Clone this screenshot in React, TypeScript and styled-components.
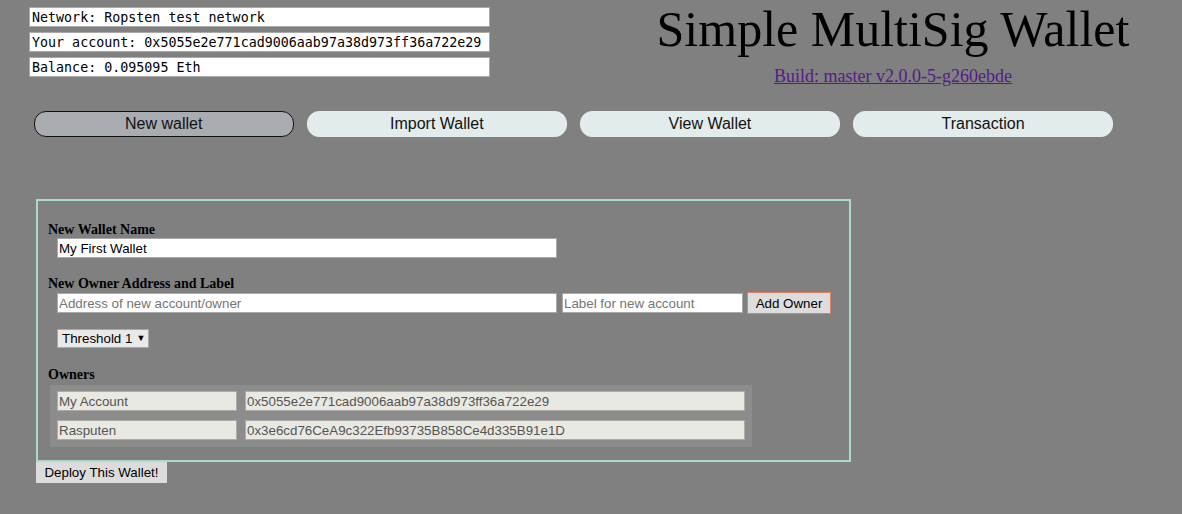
import React from "react";
import styled, { createGlobalStyle } from "styled-components";

const GlobalStyle = createGlobalStyle`
  html, body {
    margin: 0;
    padding: 0;
    background: #808080;
  }
  body {
    font-family: "Liberation Serif", serif;
    color: #000;
  }
  * { box-sizing: border-box; }
`;

const Page = styled.div`
  width: 1182px;
  min-height: 514px;
  background: #808080;
`;

const Header = styled.header`
  display: flex;
  align-items: flex-start;
`;

const InfoColumn = styled.div`
  margin: 7px 0 0 29px;
  width: 461px;
  display: flex;
  flex-direction: column;
  gap: 5px;
`;

const InfoBox = styled.div`
  height: 20px;
  background: #fff;
  border: 1px solid #a9a9a9;
  padding: 0 2px;
  font-family: "DejaVu Sans Mono", monospace;
  font-size: 13.33px;
  line-height: 19px;
  white-space: nowrap;
  color: #000;
`;

const TitleBlock = styled.div`
  flex: 1;
  margin-left: 114px;
  text-align: center;
`;

const Title = styled.h1`
  margin: 0;
  font-family: "Liberation Serif", serif;
  font-weight: normal;
  font-size: 50px;
  line-height: normal;
  color: #000;
`;

const BuildLink = styled.a`
  display: inline-block;
  margin-top: 8px;
  font-family: "Liberation Serif", serif;
  font-size: 18px;
  color: #551a8b;
  text-decoration: underline;
`;

const Tabs = styled.nav`
  display: flex;
  gap: 13.6px;
  margin: 24px 0 0 34px;
`;

const Tab = styled.button<{ $active?: boolean }>`
  width: 259.5px;
  height: 26px;
  border-radius: 12px;
  border: 1px solid ${(p) => (p.$active ? "#111" : "#e3ecec")};
  background: ${(p) => (p.$active ? "#a9adb1" : "#e3ecec")};
  font-family: "Liberation Sans", sans-serif;
  font-size: 16px;
  color: #111;
  padding: 0;
  cursor: pointer;
`;

const FormBox = styled.section`
  margin: 62px 0 0 36px;
  width: 815px;
  border: 2px solid #a9d9cf;
  padding: 21px 10px 13px 10px;
`;

const Label = styled.div`
  font-family: "Liberation Serif", serif;
  font-weight: bold;
  font-size: 14px;
  line-height: 16px;
  color: #000;
`;

const FieldRow = styled.div<{ $mb?: number }>`
  display: flex;
  align-items: center;
  margin-left: 9px;
  margin-bottom: ${(p) => p.$mb ?? 0}px;
`;

const TextInput = styled.input<{ $w: number }>`
  width: ${(p) => p.$w}px;
  height: 20px;
  border: 1px solid #a9a9a9;
  background: #fff;
  padding: 0 1px;
  font-family: "Liberation Sans", sans-serif;
  font-size: 13.33px;
  color: #000;
  outline: none;
  &::placeholder { color: #757575; }
`;

const LabelInput = styled(TextInput)`
  margin-left: 5px;
`;

const AddButton = styled.button`
  margin-left: 4px;
  width: 84px;
  height: 22px;
  background: #dddddd;
  border: 1px solid #e07f62;
  font-family: "Liberation Sans", sans-serif;
  font-size: 13.33px;
  color: #000;
  padding: 0;
`;

const Select = styled.div`
  display: flex;
  align-items: center;
  gap: 4px;
  width: 92px;
  height: 19px;
  background: #e9e9e9;
  border: 1px solid #a9a9a9;
  padding: 0 0 0 4px;
  font-family: "Liberation Sans", sans-serif;
  font-size: 13.33px;
  white-space: nowrap;
  color: #000;
`;

const Arrow = styled.span`
  font-size: 9px;
  line-height: 1;
`;

const OwnersTable = styled.div`
  margin: 2px 0 0 2px;
  width: 702px;
  background: #8c8c8c;
  display: grid;
  grid-template-columns: 180px 500px;
  column-gap: 8px;
  row-gap: 9px;
  padding: 6px 7px 7px 7px;
`;

const OwnerCell = styled.input`
  width: 100%;
  height: 20px;
  background: #e9e9e2;
  border: 1px solid #ababab;
  padding: 0 1px;
  font-family: "Liberation Sans", sans-serif;
  font-size: 13.33px;
  color: #545454;
  outline: none;
`;

const DeployButton = styled.button`
  display: block;
  margin-left: 36px;
  width: 131px;
  height: 21px;
  background: #dcdcdc;
  border: none;
  font-family: "Liberation Sans", sans-serif;
  font-size: 13.33px;
  color: #000;
  padding: 0;
`;

const owners = [
  { label: "My Account", address: "0x5055e2e771cad9006aab97a38d973ff36a722e29" },
  { label: "Rasputen", address: "0x3e6cd76CeA9c322Efb93735B858Ce4d335B91e1D" },
];

export default function App() {
  return (
    <Page>
      <GlobalStyle />
      <Header>
        <InfoColumn>
          <InfoBox>Network: Ropsten test network</InfoBox>
          <InfoBox>Your account: 0x5055e2e771cad9006aab97a38d973ff36a722e29</InfoBox>
          <InfoBox>Balance: 0.095095 Eth</InfoBox>
        </InfoColumn>
        <TitleBlock>
          <Title>Simple MultiSig Wallet</Title>
          <BuildLink href="#">Build: master v2.0.0-5-g260ebde</BuildLink>
        </TitleBlock>
      </Header>

      <Tabs>
        <Tab $active>New wallet</Tab>
        <Tab>Import Wallet</Tab>
        <Tab>View Wallet</Tab>
        <Tab>Transaction</Tab>
      </Tabs>

      <FormBox>
        <Label>New Wallet Name</Label>
        <FieldRow $mb={18}>
          <TextInput $w={500} defaultValue="My First Wallet" />
        </FieldRow>

        <Label>New Owner Address and Label</Label>
        <FieldRow $mb={15}>
          <TextInput $w={500} placeholder="Address of new account/owner" />
          <LabelInput $w={181} placeholder="Label for new account" />
          <AddButton>Add Owner</AddButton>
        </FieldRow>

        <FieldRow $mb={19}>
          <Select>
            <span>Threshold 1</span>
            <Arrow>▼</Arrow>
          </Select>
        </FieldRow>

        <Label>Owners</Label>
        <OwnersTable>
          {owners.map((o) => (
            <React.Fragment key={o.address}>
              <OwnerCell disabled value={o.label} readOnly />
              <OwnerCell disabled value={o.address} readOnly />
            </React.Fragment>
          ))}
        </OwnersTable>
      </FormBox>
      <DeployButton>Deploy This Wallet!</DeployButton>
    </Page>
  );
}
